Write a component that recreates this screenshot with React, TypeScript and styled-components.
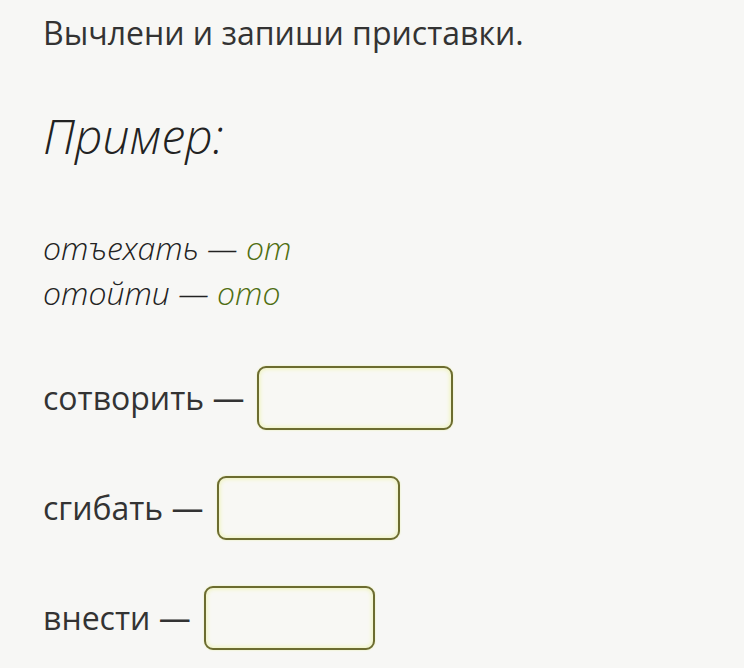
import React from 'react';
import styled, { createGlobalStyle } from 'styled-components';

const GlobalStyle = createGlobalStyle`
    html, body {
        margin: 0;
        padding: 0;
        background: #f7f7f5;
    }
    body {
        font-family: "Open Sans", "Liberation Sans", sans-serif;
        color: #333333;
    }
`;

const Page = styled.div`
    width: 744px;
    height: 668px;
    padding: 11px 0 0 43px;
    box-sizing: border-box;
    overflow: hidden;
`;

const Task = styled.div`
    font-size: 32px;
    line-height: 44px;
`;

const ExampleTitle = styled.div`
    margin-top: 53px;
    font-size: 48px;
    line-height: 56px;
    font-style: italic;
    font-weight: 300;
    color: #222222;
`;

const ExampleList = styled.div`
    margin-top: 61px;
    font-size: 32px;
    line-height: 45px;
    font-style: italic;
    font-weight: 300;
    color: #222222;
`;

const Prefix = styled.span`
    color: #4f6e12;
`;

const Rows = styled.div`
    margin-top: 51px;
    display: flex;
    flex-direction: column;
    gap: 46px;
`;

const Row = styled.div`
    display: flex;
    align-items: center;
    font-size: 32px;
    line-height: 44px;
`;

const AnswerBox = styled.input<{ $w: number }>`
    width: ${p => p.$w}px;
    height: 64px;
    margin-left: 13px;
    box-sizing: border-box;
    border: 2px solid #6c6c30;
    border-radius: 9px;
    background: #f8f8f4;
    box-shadow: inset 0 0 4px 1px #eef3b8, 0 0 2px #e8efa8;
    outline: none;
    font-family: inherit;
    font-size: 28px;
    padding: 0 12px;
`;

const examples = [
    { word: 'отъехать', prefix: 'от' },
    { word: 'отойти', prefix: 'ото' },
];

const tasks = [
    { word: 'сотворить', w: 196 },
    { word: 'сгибать', w: 183 },
    { word: 'внести', w: 171 },
];

const App = () => {
    return (
        <Page>
            <GlobalStyle />
            <Task>{'Вычлени и запиши приставки.'}</Task>
            <ExampleTitle>{'Пример:'}</ExampleTitle>
            <ExampleList>
                {examples.map(e => (
                    <div key={e.word}>
                        {e.word} — <Prefix>{e.prefix}</Prefix>
                    </div>
                ))}
            </ExampleList>
            <Rows>
                {tasks.map(t => (
                    <Row key={t.word}>
                        {t.word} —
                        <AnswerBox $w={t.w} />
                    </Row>
                ))}
            </Rows>
        </Page>
    );
};

export default App;
